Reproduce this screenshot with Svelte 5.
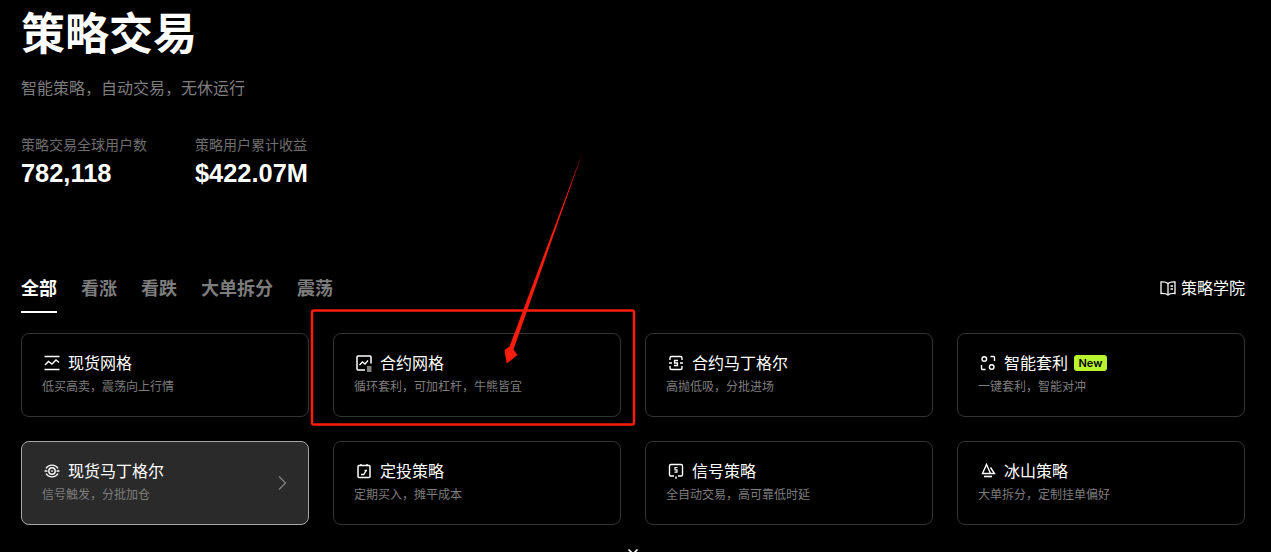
<script lang="ts">
  // icon bodies keyed by strategy, all on a 20x20 viewBox
  const rows = [
    [
      { icon: 'grid', title: '现货网格', desc: '低买高卖，震荡向上行情' },
      { icon: 'futures', title: '合约网格', desc: '循环套利，可加杠杆，牛熊皆宜' },
      { icon: 'martin', title: '合约马丁格尔', desc: '高抛低吸，分批进场' },
      { icon: 'arb', title: '智能套利', desc: '一键套利，智能对冲', badge: 'New' },
    ],
    [
      { icon: 'spot', title: '现货马丁格尔', desc: '信号触发，分批加仓', active: true },
      { icon: 'dca', title: '定投策略', desc: '定期买入，摊平成本' },
      { icon: 'signal', title: '信号策略', desc: '全自动交易，高可靠低时延' },
      { icon: 'iceberg', title: '冰山策略', desc: '大单拆分，定制挂单偏好' },
    ],
  ];

  const tabs = ['全部', '看涨', '看跌', '大单拆分', '震荡'];
  let current = $state('全部');
</script>

{#snippet strategyIcon(name: string)}
  <svg class="icon" viewBox="0 0 20 20" fill="none" stroke="currentColor" stroke-width="1.4">
    {#if name === 'grid'}
      <path d="M2.500 3.500h15M2.500 16.500h15" />
      <path d="M3 12l3.500-3.500 3.500 2.500 4-4 3 2.500" />
    {:else if name === 'futures'}
      <path d="M17 10.500V4a1 1 0 0 0-1-1H4a1 1 0 0 0-1 1v12a1 1 0 0 0 1 1h7" stroke-width="1.5" />
      <path d="M5.500 12l3-3 2.500 2 3-3.500" />
      <path d="M13 14h4.500M13 16h4.500M13 18h4.500" stroke-width="1" />
    {:else if name === 'martin'}
      <path d="M4 7V5a1.500 1.500 0 0 1 1.500-1.500h9A1.500 1.500 0 0 1 16 5v2M4 13v2a1.500 1.500 0 0 0 1.500 1.500h9A1.500 1.500 0 0 0 16 15v-2M3 10h3M14 10h3" />
      <path d="M12 7.500H8.500V10h3v2.500H8" stroke-width="1.3" />
    {:else if name === 'arb'}
      <circle cx="6.300" cy="6" r="2.300" />
      <circle cx="13.700" cy="14" r="2.300" />
      <path d="M12.500 3.500h3a1 1 0 0 1 1 1v3.500M3.500 12v3.500a1 1 0 0 0 1 1h3" />
    {:else if name === 'spot'}
      <path d="M4 7.500a7 7 0 0 1 12 0M4 12.500a7 7 0 0 0 12 0M2.500 10h3M14.500 10h3" />
      <circle cx="10" cy="10" r="3.200" />
      <path d="M8.800 10h2.400" stroke-width="1.100" />
    {:else if name === 'dca'}
      <path d="M5 4.500h10a1 1 0 0 1 1 1v10a1 1 0 0 1-1 1H5a1 1 0 0 1-1-1v-10a1 1 0 0 1 1-1z" stroke-width="1.500" />
      <path d="M7 3v2M13 3v2" />
      <path d="M7 13.500h2.800l2.400-4M10.500 9.500h2.500" stroke-width="1.300" />
    {:else if name === 'signal'}
      <path d="M8 15H5a1.500 1.500 0 0 1-1.500-1.500V5A1.500 1.500 0 0 1 5 3.500h10A1.500 1.500 0 0 1 16.500 5v8.500A1.500 1.500 0 0 1 15 15h-3" />
      <path d="M10 15.500v2.300" stroke-width="1.500" />
      <path d="M11.500 6.500H9v2.300h2v2.400H8.500" stroke-width="1.200" />
    {:else if name === 'iceberg'}
      <path d="M8.500 3.500L4.500 12.500h8zM12.500 6.500L16.500 12.500h-4" />
      <path d="M6 15.500h8" stroke-width="1.600" />
    {/if}
  </svg>
{/snippet}

<div class="page">
  <h1>策略交易</h1>
  <p class="subtitle">智能策略，自动交易，无休运行</p>

  <div class="stats">
    <div class="stat">
      <span class="stat-label">策略交易全球用户数</span>
      <span class="stat-value">782,118</span>
    </div>
    <div class="stat">
      <span class="stat-label">策略用户累计收益</span>
      <span class="stat-value">$422.07M</span>
    </div>
  </div>

  <div class="tabbar">
    <div class="tabs">
      {#each tabs as tab}
        <button class="tab" class:active={current === tab} onclick={() => (current = tab)}>{tab}</button>
      {/each}
    </div>
    <a class="academy" href="#academy">
      <svg class="book" viewBox="0 0 18 18" fill="none" stroke="currentColor" stroke-width="1.300">
        <path d="M9 4.500C7.500 3.300 5 2.800 2 3v11.500c3-.2 5.500.300 7 1.500 1.500-1.200 4-1.700 7-1.500V3c-3-.2-5.500.300-7 1.500z" />
        <path d="M9 4.500V16M11.500 7h2.500M11.500 10h2.500" />
      </svg>
      策略学院
    </a>
  </div>

  <div class="grid">
    {#each rows as row}
      {#each row as card}
        <div class="card" class:active={card.active}>
          <div class="card-text">
            <div class="card-title">
              {@render strategyIcon(card.icon)}
              <span>{card.title}</span>
              {#if card.badge}<span class="badge">{card.badge}</span>{/if}
            </div>
            <div class="card-desc">{card.desc}</div>
          </div>
          {#if card.active}
            <svg class="chevron" viewBox="0 0 10 16" fill="none" stroke="currentColor" stroke-width="1.400">
              <path d="M1 1.500L7.500 8 1 14.500" />
            </svg>
          {/if}
        </div>
      {/each}
    {/each}
  </div>

  <div class="more">
    <svg viewBox="0 0 12 8" width="12" height="8" fill="none" stroke="#fff" stroke-width="1.600">
      <path d="M1.500 0.500L6 5l4.500-4.500" />
    </svg>
  </div>

  <!-- hand drawn annotation over the screenshot -->
  <svg class="markup" viewBox="0 0 1271 552" width="1271" height="552">
    <rect x="312" y="310.500" width="322" height="114" rx="2" fill="none" stroke="#fb1c0e" stroke-width="2.500" />
    <path d="M582.700 152L513.500 349.500L517.500 355L506.700 363.500L504.500 350L509.500 346.500z" fill="#fb1c0e" />
  </svg>
</div>

<style>
  :global(body) {
    margin: 0;
    background: #000;
  }

  .page {
    position: relative;
    box-sizing: border-box;
    width: 1271px;
    height: 552px;
    padding: 6px 26px 0 21px;
    overflow: hidden;
    background: #000;
    color: #fff;
    font-family: Inter, "Noto Sans CJK SC", sans-serif;
  }

  h1 {
    margin: 0;
    font-size: 44px;
    line-height: 56px;
    font-weight: 700;
  }

  .subtitle {
    margin: 14px 0 0;
    font-size: 16px;
    line-height: 24px;
    color: #7d7d7d;
  }

  .stats {
    display: flex;
    gap: 48px;
    margin-top: 35px;
  }

  .stat {
    display: flex;
    flex-direction: column;
  }

  .stat-label {
    font-size: 14px;
    line-height: 20px;
    color: #6e6e6e;
  }

  .stat-value {
    margin-top: 2px;
    font-family: "Liberation Sans", sans-serif;
    font-size: 25.4px;
    line-height: 32px;
    font-weight: 700;
  }

  .tabbar {
    display: flex;
    align-items: center;
    justify-content: space-between;
    margin-top: 87px;
  }

  .tabs {
    display: flex;
    gap: 24px;
  }

  .tab {
    padding: 0 0 9px;
    border: 0;
    border-bottom: 2px solid transparent;
    background: none;
    color: #7d7d7d;
    font: 700 18px/26px Inter, "Noto Sans CJK SC", sans-serif;
    cursor: pointer;
  }

  .tab.active {
    color: #fff;
    border-bottom-color: #fff;
  }

  .academy {
    display: flex;
    align-items: center;
    gap: 4px;
    margin-bottom: 13px;
    color: #fff;
    font-size: 16px;
    line-height: 24px;
    text-decoration: none;
  }

  .book {
    width: 18px;
    height: 18px;
  }

  .grid {
    display: grid;
    grid-template-columns: repeat(4, 288px);
    grid-auto-rows: 84px;
    gap: 24px;
    margin-top: 20px;
  }

  .card {
    display: flex;
    align-items: center;
    justify-content: space-between;
    box-sizing: border-box;
    padding: 0 20px;
    border: 1px solid #333;
    border-radius: 8px;
  }

  .card.active {
    background: #2a2a2a;
    border-color: #a6a6a6;
  }

  .card-text {
    padding-bottom: 3px;
  }

  .card-title {
    display: flex;
    align-items: center;
    gap: 6px;
    font-size: 16px;
    line-height: 24px;
  }

  .icon {
    width: 20px;
    height: 20px;
    flex: none;
  }

  .badge {
    padding: 0 4.500px;
    border-radius: 3px;
    background: #b8f52e;
    color: #000;
    font-size: 11px;
    line-height: 16px;
    font-weight: 600;
  }

  .card-desc {
    margin-top: 3px;
    font-size: 12px;
    line-height: 18px;
    color: #7d7d7d;
  }

  .chevron {
    width: 10px;
    height: 16px;
    color: #7d7d7d;
  }

  .more {
    display: flex;
    justify-content: center;
    margin-top: 24px;
  }

  .markup {
    position: absolute;
    left: 0;
    top: 0;
    pointer-events: none;
  }
</style>
